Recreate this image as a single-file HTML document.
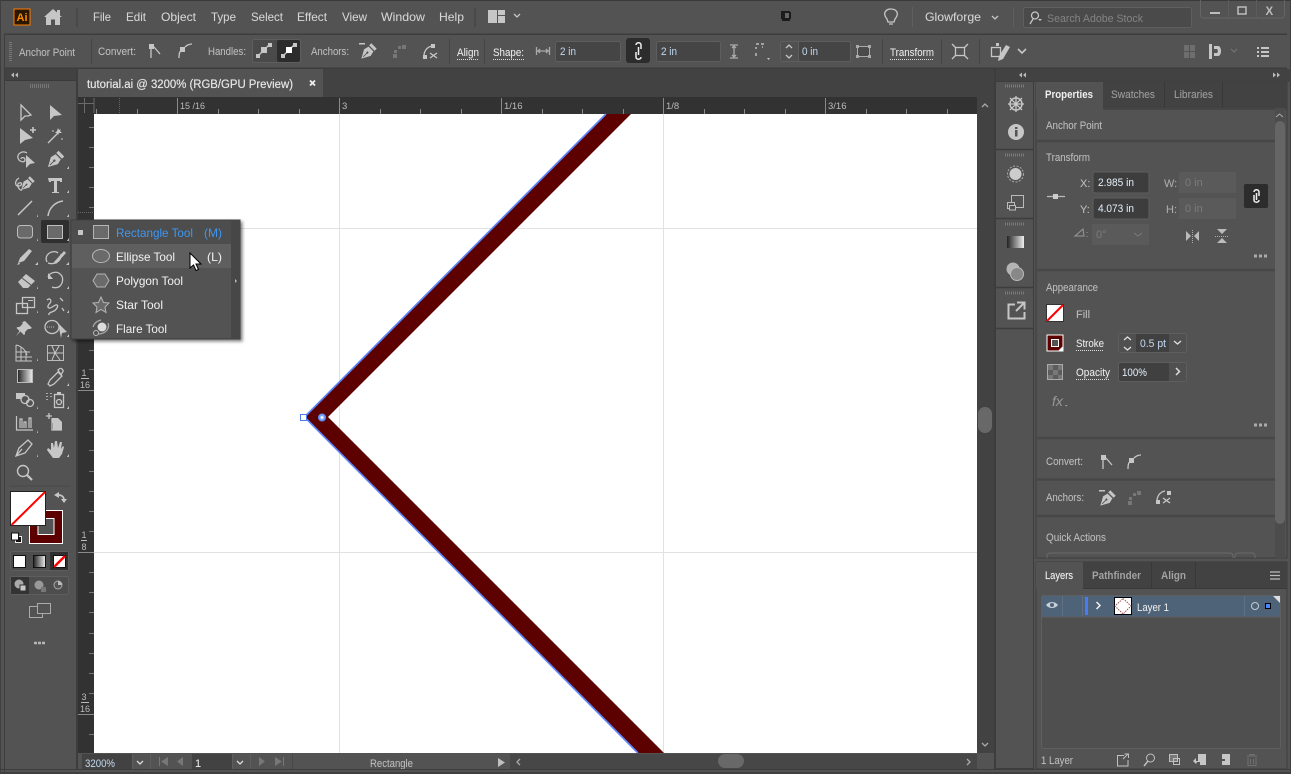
<!DOCTYPE html>
<html><head><meta charset="utf-8"><title>tutorial.ai</title>
<style>
html,body{margin:0;padding:0;background:#535353;overflow:hidden}
svg{display:block}
text{font-family:"Liberation Sans",sans-serif;font-size:11px;fill:#c8c8c8;white-space:pre;stroke:rgba(210,210,210,.22);stroke-width:.25}
.m{font-size:12px;fill:#d6d6d6}
.l{fill:#bdbdbd}
.w{fill:#f0f0f0}
.v{fill:#bcd4ee}
.r{font-size:9.5px;fill:#bbb;stroke:none}
.s{fill:none;stroke:#c6c6c6;stroke-width:1.3}
.f{fill:#c6c6c6}
.d{fill:none;stroke:#ddd;stroke-width:1;stroke-dasharray:1 1}
.i{fill:#454545;stroke:#5e5e5e}
.g{stroke:#e2e2e2;stroke-width:1}
.k{stroke:#8a8a8a;stroke-width:1}
.x{fill:#3f3f3f}
</style></head>
<body>
<svg width="1291" height="774" viewBox="0 0 1291 774" xmlns="http://www.w3.org/2000/svg">
<defs>
<g id="nib"><path fill="#c6c6c6" d="M0 11L-5.500 1L-4 -5H4L5.500 1Z"/><rect x="-4.500" y="-10" width="9" height="3.500" fill="#c6c6c6"/><path d="M0 8V2" stroke="#535353" stroke-width="1"/><circle cx="0" cy="1" r="1.300" fill="#535353"/></g>
<linearGradient id="gr"><stop offset="0" stop-color="#222"/><stop offset="1" stop-color="#eee"/></linearGradient>
<filter id="sh" x="-10%" y="-10%" width="125%" height="125%"><feDropShadow dx="2" dy="2" stdDeviation="1.500" flood-color="#000" flood-opacity=".5"/></filter>
</defs>
<rect width="1291" height="774" fill="#535353"/>
<rect width="1291" height="1" fill="#3a3a3a"/>
<rect y="772" width="1291" height="2" fill="#3f3f3f"/>
<rect y="0" width="1" height="774" fill="#3f3f3f"/><rect x="1290" width="1" height="774" fill="#3f3f3f"/>

<!-- top bar -->
<rect x="14" y="9" width="16" height="16" fill="#2b1700" stroke="#ff7c00" stroke-width="1"/>
<text x="16.500" y="21" style="font-size:11px;font-weight:bold;fill:#ff8a00;stroke:none">Ai</text>
<path class="f" d="M44 17 L53 9 L57 12.500 V10 H60 V15.500 L62 17 H60 V25 H55 V19.500 H51 V25 H46 V17Z"/>
<rect x="76" y="8" width="2" height="19" fill="#494949"/>
<text class="m" x="93" y="21" textLength="18" lengthAdjust="spacingAndGlyphs">File</text>
<text class="m" x="126" y="21" textLength="20" lengthAdjust="spacingAndGlyphs">Edit</text>
<text class="m" x="161" y="21" textLength="35" lengthAdjust="spacingAndGlyphs">Object</text>
<text class="m" x="211" y="21" textLength="25" lengthAdjust="spacingAndGlyphs">Type</text>
<text class="m" x="251" y="21" textLength="32" lengthAdjust="spacingAndGlyphs">Select</text>
<text class="m" x="297" y="21" textLength="30" lengthAdjust="spacingAndGlyphs">Effect</text>
<text class="m" x="342" y="21" textLength="25" lengthAdjust="spacingAndGlyphs">View</text>
<text class="m" x="381" y="21" textLength="44" lengthAdjust="spacingAndGlyphs">Window</text>
<text class="m" x="439" y="21" textLength="25" lengthAdjust="spacingAndGlyphs">Help</text>
<rect x="474" y="8" width="2" height="19" fill="#494949"/>
<path class="f" d="M488 10h9v13h-9zM498 10h7v5h-7zM498 16h7v7h-7z"/>
<path class="s" d="M514 14l3 3 3-3"/>
<path fill="#1c1c1c" d="M781 11h9v1h1v7h-1v2h-8v-2h-1z"/><rect x="785" y="13" width="4" height="5" fill="#666"/>
<path class="s" d="M887 19c-5-6-1-10 4-10s9 4 4 10l-1 3h-6zM889 24h4"/>
<rect x="912" y="7" width="1" height="20" fill="#5f5f5f"/>
<text class="m" x="925" y="21" textLength="56" lengthAdjust="spacingAndGlyphs">Glowforge</text>
<path class="s" d="M992 16l3 3 3-3"/>
<rect x="1013" y="7" width="1" height="20" fill="#5f5f5f"/>
<rect x="1023.500" y="7.500" width="168" height="20" rx="2" fill="#4a4a4a" stroke="#5f5f5f"/>
<circle cx="1035" cy="15.500" r="3.500" class="s"/><path class="s" d="M1033 19l-3 5"/><path class="f" d="M1038 19h4l-2 2z"/>
<text x="1047" y="22" textLength="96" lengthAdjust="spacingAndGlyphs" style="fill:#848484;stroke:none">Search Adobe Stock</text>
<path d="M1200.500 0v15a3 3 0 0 0 3 3h78a3 3 0 0 0 3-3V0" fill="none" stroke="#656565"/>
<path d="M1228.500 0v18M1256.500 0v18" stroke="#5c5c5c"/>
<rect x="1210" y="12" width="10" height="2" fill="#bdbdbd"/>
<rect x="1238" y="7" width="8" height="7" fill="none" stroke="#bdbdbd" stroke-width="1.500"/>
<text x="1265.500" y="15" style="font-size:11.500px;font-weight:bold;fill:#bbb;stroke:none">X</text>

<!-- control bar -->
<rect x="4" y="33.500" width="1283" height="1.500" fill="#3d3d3d"/>
<rect x="4" y="67.500" width="1283" height="1.500" fill="#3d3d3d"/>
<rect x="4" y="34" width="1" height="740" fill="#3d3d3d"/>
<path d="M10.500 42v19" stroke="#777" stroke-width="3" stroke-dasharray="1 1"/>
<text class="l" x="19" y="56" textLength="56" lengthAdjust="spacingAndGlyphs">Anchor Point</text>
<rect x="91" y="39" width="1" height="25" fill="#454545"/>
<text class="l" x="98" y="55" textLength="38" lengthAdjust="spacingAndGlyphs">Convert:</text>
<rect x="149" y="44" width="5" height="5" class="f"/><path class="s" d="M151 49v9M154 47l6 7"/>
<rect x="180" y="47" width="5" height="5" class="f"/><path class="s" d="M179 58c0-5 1-7 2-7M185 47c2-2 4-3 7-3"/>
<text class="l" x="208" y="55" textLength="38" lengthAdjust="spacingAndGlyphs">Handles:</text>
<rect x="252.500" y="39.500" width="48" height="23" rx="2" fill="#4a4a4a" stroke="#5e5e5e"/>
<rect x="277" y="40" width="23" height="22" rx="2" fill="#2c2c2c"/>
<path class="s" d="M258 56l12-12"/><rect x="261" y="47" width="6" height="6" class="f"/><rect x="256" y="54" width="4" height="4" class="f"/><rect x="268" y="43" width="4" height="4" class="f"/>
<path class="s" d="M283 56l12-12" /><rect x="286" y="47" width="6" height="6" fill="#fff"/><rect x="281" y="54" width="4" height="4" class="f"/><rect x="293" y="43" width="4" height="4" class="f"/>
<text class="l" x="311" y="55" textLength="38" lengthAdjust="spacingAndGlyphs">Anchors:</text>
<use href="#nib" transform="translate(368 52) rotate(45) scale(.85)"/><rect x="359" y="43" width="6" height="1.500" class="f"/>
<path fill="#777" d="M393 54h4v4h-4zM394 50h3v3h-3zM398 46h3v3h-3zM402 45h4v4h-4z"/>
<path class="s" d="M424 56c0-5 3-9 8-10"/><rect x="431" y="44" width="4" height="4" class="f"/><rect x="423" y="55" width="4" height="4" class="f"/><path class="s" d="M430 53l7 5M430 58l7-5"/>
<rect x="449" y="39" width="1" height="25" fill="#454545"/>
<text class="w" x="457" y="56" textLength="22" lengthAdjust="spacingAndGlyphs">Align</text><path class="d" d="M457 59.500h22"/>
<rect x="484" y="39" width="1" height="25" fill="#454545"/>
<text class="w" x="493" y="56" textLength="31" lengthAdjust="spacingAndGlyphs">Shape:</text><path class="d" d="M493 59.500h31"/>
<path class="s" style="stroke:#aaa" d="M536.500 47v8M549.500 47v8M537 51h12M540 49l-2 2 2 2M546 49l2 2-2 2"/>
<rect x="555.500" y="41.500" width="65" height="20" rx="2" class="i"/>
<text class="v" x="560" y="55" textLength="16" lengthAdjust="spacingAndGlyphs">2 in</text>
<rect x="626" y="38" width="24" height="25" rx="3" fill="#2c2c2c"/>
<path d="M636 45c0-3 5-3 5 0v4M641 57c0 3-5 3-5 0v-5M638.500 47v8" fill="none" stroke="#eee" stroke-width="1.500"/>
<rect x="656.500" y="41.500" width="64" height="20" rx="2" class="i"/>
<text class="v" x="661" y="55" textLength="16" lengthAdjust="spacingAndGlyphs">2 in</text>
<path class="s" style="stroke:#aaa" d="M730 45h8M730 58h8M734 45v13M732 48l2-2 2 2M732 55l2 2 2-2"/>
<path d="M756 44h3M761 44h3M756 47v2M756 53v3M762 47h1" stroke="#bbb" fill="none" stroke-width="1.500"/><path class="f" d="M767 58h3l-1.500 2z"/>
<rect x="780.500" y="41.500" width="70" height="20" rx="2" class="i"/>
<rect x="781" y="42" width="17" height="19" fill="#505050"/><rect x="798" y="42" width="1" height="19" fill="#5e5e5e"/>
<path class="s" d="M786 48l3-3 3 3M786 55l3 3 3-3"/>
<text class="v" x="802" y="55" textLength="16" lengthAdjust="spacingAndGlyphs">0 in</text>
<rect x="857.500" y="46.500" width="12" height="10" fill="#4a4a4a" stroke="#aaa"/><path d="M856 45h3v3h-3zM868 45h3v3h-3zM856 55h3v3h-3zM868 55h3v3h-3z" fill="#aaa"/>
<rect x="882" y="39" width="1" height="25" fill="#454545"/>
<text class="w" x="890" y="56" textLength="44" lengthAdjust="spacingAndGlyphs">Transform</text><path class="d" d="M890 59.500h44"/>
<rect x="941" y="39" width="1" height="25" fill="#454545"/>
<rect x="955.500" y="47.500" width="9" height="8" class="s" style="fill:none"/><path class="s" d="M952 44l4 4M968 44l-4 4M952 59l4-4M968 59l-4-4"/>
<rect x="979" y="39" width="1" height="25" fill="#454545"/>
<rect x="991.500" y="47.500" width="9" height="9" class="s"/><path class="f" d="M1006 45l4 2-7 12-5 2 1-5z"/><rect x="996" y="43" width="3" height="3" class="f"/>
<path class="s" d="M1018 49l4 4 4-4" style="stroke-width:1.600"/>
<path fill="#6e6e6e" d="M1184 45h5v6h-5zM1190 45h5v6h-5zM1184 52h5v6h-5zM1190 52h5v6h-5z"/>
<path class="f" d="M1209 44h3v15h-3zM1214 46h4c4 0 4 10 0 10h-4v-3h3c1 0 1-4 0-4h-3z"/>
<path d="M1231 49l3 3 3-3" fill="none" stroke="#777"/>
<path class="f" d="M1257 47h2v2h-2zM1261 47h8v2h-8zM1257 51h2v2h-2zM1261 51h8v2h-8zM1257 55h2v2h-2zM1261 55h8v2h-8z"/>

<!-- collapse rows -->
<rect x="5" y="69" width="71" height="11" fill="#424242"/>
<rect x="5" y="80" width="71" height="1" fill="#3a3a3a"/>
<path d="M14 72.500l-3 2.500 3 2.500zM18 72.500l-3 2.500 3 2.500z" fill="#bbb"/>
<path d="M30 86h19" stroke="#777" stroke-width="4" stroke-dasharray="1 1"/>
<rect x="76" y="69" width="2" height="700" fill="#3d3d3d"/>

<!-- tab bar -->
<rect x="78" y="69" width="916" height="28" fill="#424242"/>
<rect x="78" y="69" width="245" height="28" fill="#535353"/>
<text x="87" y="88" textLength="206" lengthAdjust="spacingAndGlyphs" style="font-size:11.500px;fill:#eaeaea;stroke:rgba(234,234,234,.5);stroke-width:.35">tutorial.ai @ 3200% (RGB/GPU Preview)</text>
<path d="M310 80.500l5 5M315 80.500l-5 5" stroke="#eee" stroke-width="1.800"/>

<!-- rulers -->
<rect x="78" y="97" width="899" height="17" fill="#323232"/>
<rect x="78" y="97" width="16" height="656" fill="#323232"/>
<path d="M78 103.500h16M84.500 98v15M94 98v15" stroke="#6a6a6a" fill="none"/>
<path d="M119.500 98v15" stroke="#666" stroke-dasharray="1 1"/>
<path class="k" d="M177.500 98v16M339.500 98v16M501.500 98v16M663.500 98v16M825.500 98v16"/>
<path class="k" d="M96.500 109v5M137.500 109v5M218.500 109v5M258.500 109v5M299.500 109v5M380.500 109v5M420.500 109v5M461.500 109v5M542.500 109v5M582.500 109v5M623.500 109v5M704.500 109v5M744.500 109v5M785.500 109v5M866.500 109v5M906.500 109v5M947.500 109v5"/>
<text class="r" x="180" y="109" textLength="25" lengthAdjust="spacingAndGlyphs">15 /16</text>
<text class="r" x="342" y="109">3</text>
<text class="r" x="504" y="109">1/16</text>
<text class="r" x="666" y="109">1/8</text>
<text class="r" x="828" y="109">3/16</text>
<path d="M78 212.500h16" stroke="#666" stroke-dasharray="1 1"/>
<path stroke="#777" d="M89 127.500h5M89 147.500h5M89 167.500h5M89 187.500h5M89 207.500h5M89 248.500h5M89 269.500h5M89 289.500h5M89 309.500h5M89 329.500h5M89 350.500h5M89 369.500h5M89 410.500h5M89 430.500h5M89 450.500h5M89 471.500h5M89 491.500h5M89 511.500h5M89 531.500h5M89 572.500h5M89 592.500h5M89 612.500h5M89 633.500h5M89 653.500h5M89 673.500h5M89 693.500h5M89 734.500h5"/>
<path class="k" d="M78 390.500h16M78 552.500h16M78 714.500h16"/>
<text class="r" x="81.500" y="376" style="font-size:9px">1</text><path d="M81 378.500h8" stroke="#bbb"/><text class="r" x="80" y="388" style="font-size:9px">16</text>
<text class="r" x="81.500" y="538" style="font-size:9px">1</text><path d="M81 540.500h6" stroke="#bbb"/><text class="r" x="81.500" y="550" style="font-size:9px">8</text>
<text class="r" x="81.500" y="700" style="font-size:9px">3</text><path d="M81 702.500h8" stroke="#bbb"/><text class="r" x="80" y="712" style="font-size:9px">16</text>

<!-- canvas -->
<rect x="94" y="114" width="883" height="639" fill="#fff"/>
<path class="g" d="M339.500 114v639M663.500 114v639M94 228.500h883M94 552.500h883"/>
<polygon points="606,114 631,114 328,417 664,753 638,753 304,417" fill="#5d0000"/>
<path d="M606 114L304.500 417L638 753" fill="none" stroke="#5a84f8" stroke-width="1.700"/>
<rect x="300.500" y="414.500" width="6" height="6" fill="#fff" stroke="#4a7bf0"/>
<circle cx="322" cy="417.500" r="3.200" fill="#9ab8ff" stroke="#5f8fff" stroke-width="1.600"/>
<circle cx="322" cy="417.500" r="1.200" fill="#fff"/>

<!-- v scroll -->
<rect x="977" y="97" width="17" height="656" fill="#424242"/>
<path class="s" style="stroke:#aaa" d="M982 107l3-3 3 3M982 743l3 3 3-3"/>
<rect x="978" y="407" width="14" height="26" rx="7" fill="#686868"/>
<rect x="994" y="69" width="2" height="700" fill="#3d3d3d"/>

<!-- status bar -->
<rect x="78" y="753" width="916" height="16" fill="#535353"/>
<rect x="82" y="754" width="50" height="16" fill="#424242"/>
<rect x="132" y="754" width="1" height="15" fill="#5e5e5e"/>
<text class="v" x="85" y="767" textLength="30" lengthAdjust="spacingAndGlyphs">3200%</text>
<path class="s" d="M137 761l3 3 3-3" style="stroke:#ddd"/>
<rect x="150" y="754" width="1" height="15" fill="#5e5e5e"/>
<path d="M159 757h1v9h-1zM168 757v9l-7-4.500zM183 757v9l-6-4.500z" fill="#777"/>
<rect x="192" y="754" width="40" height="16" fill="#424242"/>
<text class="w" x="195" y="767">1</text>
<path class="s" d="M237 761l3 3 3-3" style="stroke:#ddd"/>
<rect x="232" y="754" width="1" height="15" fill="#5e5e5e"/><rect x="250" y="754" width="1" height="15" fill="#5e5e5e"/>
<path d="M259 757v9l6-4.500zM275 757v9l7-4.500zM283 757h1v9h-1z" fill="#777"/>
<rect x="292" y="754" width="1" height="15" fill="#484848"/>
<text class="l" x="370" y="767" textLength="43" lengthAdjust="spacingAndGlyphs">Rectangle</text>
<path d="M498 758v9l7-4.500z" fill="#c0c0c0"/>
<rect x="510" y="754" width="467" height="15" fill="#474747"/>
<path class="s" style="stroke:#aaa" d="M520 759l-3 3 3 3M967 759l3 3-3 3"/>
<rect x="718" y="754" width="26" height="14" rx="7" fill="#686868"/>
<rect x="0" y="769" width="1291" height="1" fill="#3d3d3d"/>

<!-- tools -->
<path class="s" d="M21 105v15l4-4 3 0 3-1z" style="stroke-width:1.300"/>
<path class="f" d="M50 105v15l4-4 8-1z"/>
<path class="f" d="M20 128v16l5-4 8-2z"/><path class="s" d="M30 130h6M33 127v6" style="stroke-width:1.600"/>
<path class="s" d="M48 143l10-10"/><path class="f" d="M58 128l1 2 2-1-1 2 2 2-3 0-1 2-1-2-2 0 2-2zM53 130l1 1-1 1-1-1zM62 138l1 1-1 1-1-1z"/>
<path class="s" d="M27 153c-5-3-10 1-9 5s7 5 7 2-4-3-4-1"/><path class="f" d="M26 155l9 8-5 1-4 4z"/>
<use href="#nib" transform="translate(55 160) rotate(45) scale(.9)"/>
<path class="s" d="M19 178c-5 3-4 9 0 8s3-4 0-3 0 8 3 7"/>
<use href="#nib" transform="translate(27 184) rotate(45) scale(.75)"/>
<path class="f" d="M48 178h14v4h-2v-1h-3v11h2v1h-7v-1h2v-11h-3v1h-2z"/>
<path class="s" d="M18 215l14-14" style="stroke-width:1.500"/>
<path class="s" d="M48 216c1-8 7-14 15-15" style="stroke-width:1.500"/>
<rect x="17.500" y="225.500" width="15" height="12.500" rx="3" fill="#6a6a6a" stroke="#bdbdbd"/>
<rect x="41" y="220" width="28" height="23" rx="2" fill="#2f2f2f"/>
<rect x="47.500" y="225.500" width="15" height="13" fill="#6a6a6a" stroke="#bdbdbd"/>
<path class="f" d="M18 263l2-5 9-9 3 2-8 10zM17 265l3-1-1-2z"/>
<path class="s" d="M47 262c-4-8 7-13 11-9M61 254c1 8-8 11-13 9"/><path class="f" d="M54 262l10-11 2 2-10 11z"/>
<path class="f" d="M18 282l8-8 9 7-7 7h-5z"/><path d="M22 278l9 7" stroke="#535353"/>
<path class="s" d="M48 277c2-5 9-6 12-3 4 3 3 9 0 12-2 2-6 2-8 1" /><path class="f" d="M48 273v6h5z"/>
<rect x="16.500" y="303.500" width="11" height="10" class="s"/><rect x="22.500" y="297.500" width="12" height="10" class="s"/><path class="f" d="M28 300h5v1h-5z"/>
<path class="s" d="M47 300c3-3 5 1 3 3s-3 4-1 5 6-4 8-3-1 5-3 6-6 2-5 4M60 298l3 3M62 308l2 3"/>
<path class="f" d="M25 321l7 7-2 1h-2l-3 3v2l-1 1-3.500-3.500-4.500 4.500 3.500-5-3-3 1-1h2l3-3v-2z"/>
<ellipse cx="52" cy="327" rx="7" ry="6.500" class="s"/><path class="f" d="M58 323l9 9-5 1-1 5z"/><path d="M47 327h8" stroke="#bbb" stroke-dasharray="1 1"/>
<path class="s" d="M16 345v16h16M16 345c6 1 10 6 11 10M21 347v14M26 351v10M16 352h14M16 357h16" style="stroke-width:1"/>
<rect x="47.500" y="345.500" width="16" height="15" fill="none" stroke="#bbb"/><path class="s" d="M48 353l15 0M52 346l3 7 4-7M52 360l3-7 5 7" style="stroke-width:1"/>
<rect x="17.500" y="369.500" width="15" height="13" fill="url(#gr)" stroke="#bbb"/>
<path class="s" d="M48 384l2-4 8-8 4 4-8 8-4 2zM58 370c2-2 3-2 4-1s2 2 0 4l-1 2z"/>
<path class="f" d="M16 393h9v6h-9z"/><circle cx="25" cy="399.500" r="4" class="s" style="fill:#535353"/><circle cx="30" cy="403" r="3.500" class="s"/>
<path d="M46 393.500h2M50 393.500h2M46 396.500h2M50 396.500h2M46 399.500h2" stroke="#aaa" fill="none"/>
<rect x="54.500" y="394.500" width="9" height="13" class="s"/><rect x="57" y="392" width="4" height="3" class="f"/><circle cx="59" cy="402" r="2.500" class="s"/>
<path class="s" d="M16.500 416v14H33M20 428v-9h2v9M24 428v-6h2v6M29 428v-10h2v10" style="stroke-width:1.200"/>
<path class="s" d="M46 416h6M49 413v6"/><path class="f" d="M52 418h6l4 4v8H53v-7h-1z"/><path class="s" d="M52 418v12h10"/>
<path class="s" d="M16 456l3-8 9-8 4 4-7 9zM16 456l6-7"/>
<path class="f" d="M47 450l1-2 3 2v-7h2l1 5 1-7h2l1 7 2-6h2l-1 7 2-3 1 1-2 7-3 4h-6z"/>
<circle cx="23" cy="471" r="5.500" class="s" style="stroke-width:1.400"/><path d="M27 475l5 5" stroke="#c6c6c6" stroke-width="2.200"/>
<path d="M10 486h60" stroke="#4a4a4a"/>
<g fill="#c6c6c6">
<path d="M66 265h3v-3zM35 265h3v-3zM37 289h-2 3v-3zM67 289h2v-3zM37 313h1v-3zM67 313h2v-3zM67 337h2v-3zM37 361h1v-3zM67 386h2v-3zM37 409h1v-3zM67 409h2v-3zM37 433h1v-3zM37 457h1v-3zM67 457h2v-3zM37 241h1v-3zM67 241h2v-3zM37 217h1v-3zM67 217h2v-3zM67 193h2v-3zM67 169h2v-3z"/>
</g>

<!-- fill/stroke -->
<rect x="29.500" y="510.500" width="33" height="33" fill="#5d0000" stroke="#fff"/>
<rect x="38" y="518.500" width="16" height="16" fill="#535353" stroke="#fff"/>
<rect x="10.500" y="491.500" width="35" height="34" fill="#fff" stroke="#222"/>
<path d="M11.500 525L45 492" stroke="#f00" stroke-width="2"/>
<path class="f" d="M54 495l5-3v6zM61 499h6l-3 4z"/><path class="s" d="M58 495c4 0 6 2 6 5" style="stroke-width:1.700"/>
<rect x="15.500" y="536.500" width="6" height="6" fill="#111" stroke="#eee"/><rect x="11.500" y="533" width="7" height="7" fill="#fff" stroke="#111"/>
<rect x="10.500" y="551.500" width="58" height="19" rx="2" fill="#4d4d4d" stroke="#5e5e5e"/>
<rect x="50" y="552" width="18" height="18" fill="#2f2f2f"/>
<rect x="13.500" y="555.500" width="12" height="12" fill="#fff" stroke="#111"/>
<rect x="33.500" y="555.500" width="12" height="12" fill="url(#gr)" stroke="#111"/>
<rect x="53.500" y="555.500" width="12" height="12" fill="#fff" stroke="#111"/><path d="M54 567l11-11" stroke="#f00" stroke-width="2.500"/>
<rect x="10.500" y="576.500" width="58" height="18" rx="2" fill="#4d4d4d" stroke="#5e5e5e"/>
<rect x="11" y="577" width="18" height="17" fill="#333"/>
<circle cx="19" cy="584" r="4.500" fill="#aaa"/><rect x="20" y="585" width="6" height="6" fill="#c8c8c8" stroke="#333"/>
<circle cx="39" cy="585" r="4.500" fill="#999"/><rect x="41" y="587" width="5" height="5" fill="#777"/>
<circle cx="58" cy="585" r="4" fill="#555" stroke="#aaa"/><path d="M58 585h4a4 4 0 0 0-4-4z" fill="#bbb"/>
<rect x="29.500" y="606.500" width="13" height="11" fill="none" stroke="#aaa"/><rect x="37.500" y="603.500" width="13" height="10" fill="#535353" stroke="#aaa"/>
<path d="M34 643h3M38 643h3M42 643h3" stroke="#b5b5b5" stroke-width="2.500"/>

<!-- flyout -->
<rect x="71" y="220" width="169" height="119" fill="#535353" stroke="#3c3c3c" filter="url(#sh)"/>
<rect x="72" y="221" width="159" height="23" fill="#4d4d4d"/>
<rect x="72" y="244" width="159" height="24" fill="#5f5f5f"/>
<rect x="231" y="221" width="9" height="118" rx="1" fill="#474747"/>
<path d="M235 279v4l2-2z" fill="#bbb"/>
<rect x="78" y="230" width="5" height="5" fill="#c6c6c6"/>
<rect x="93.500" y="225.500" width="15" height="13" fill="#6a6a6a" stroke="#b5b5b5"/>
<ellipse cx="101" cy="256" rx="8.500" ry="6.500" fill="#6a6a6a" stroke="#b5b5b5"/>
<path d="M93 280.500l4-6.500h8l4 6.500-4 6.500h-8z" fill="#6a6a6a" stroke="#b5b5b5"/>
<path d="M101 297l2.500 5.500 5.500.5-4 4 1 5.500-5-3-5 3 1-5.500-4-4 5.500-.5z" fill="#6a6a6a" stroke="#b5b5b5"/>
<circle cx="102" cy="327" r="4.500" fill="#ddd"/><path d="M108 323c2 5-2 11-10 11M93 327c1-4 4-6 8-7" class="s" style="stroke:#aaa"/><circle cx="96" cy="333" r="2.500" fill="#535353" stroke="#bbb"/>
<text x="116" y="237" textLength="77" lengthAdjust="spacingAndGlyphs" style="font-size:12px;fill:#3e97f0;stroke:none">Rectangle Tool</text>
<text x="204" y="237" textLength="18" lengthAdjust="spacingAndGlyphs" style="font-size:12px;fill:#3e97f0;stroke:none">(M)</text>
<text class="w" x="116" y="261" textLength="59" lengthAdjust="spacingAndGlyphs" style="font-size:12px">Ellipse Tool</text>
<text class="w" x="207" y="261" textLength="15" lengthAdjust="spacingAndGlyphs" style="font-size:12px">(L)</text>
<text class="w" x="116" y="285" textLength="67" lengthAdjust="spacingAndGlyphs" style="font-size:12px">Polygon Tool</text>
<text class="w" x="116" y="309" textLength="47" lengthAdjust="spacingAndGlyphs" style="font-size:12px">Star Tool</text>
<text class="w" x="116" y="333" textLength="51" lengthAdjust="spacingAndGlyphs" style="font-size:12px">Flare Tool</text>
<path d="M190 253v15l3.500-3 2.500 5.500 2.500-1-2.500-5.500h5z" fill="#fff" stroke="#000"/>

<!-- right collapse -->
<rect x="996" y="69" width="295" height="13" fill="#424242"/>
<path d="M1022 72.500l-3 2.500 3 2.500zM1026 72.500l-3 2.500 3 2.500z" fill="#bbb"/>
<path d="M1273 72.500l3 2.500-3 2.500zM1277 72.500l3 2.500-3 2.500z" fill="#bbb"/>

<!-- dock -->
<rect x="995.500" y="81.500" width="38" height="687" fill="#535353" stroke="#3d3d3d"/>
<path d="M996 149.500h37M996 218.500h37M996 287.500h37M996 328.500h37" stroke="#3d3d3d" stroke-width="1.500"/>
<path d="M1005 86h19M1005 155h19M1005 224h19M1005 293h19" stroke="#7a7a7a" stroke-width="3" stroke-dasharray="1 1"/>
<circle cx="1016" cy="104" r="6" fill="none" stroke="#c6c6c6" stroke-width="1.500"/><circle cx="1016" cy="104" r="2" fill="#c6c6c6"/><path class="s" d="M1016 96v16M1008 104h16M1010 98l12 12M1022 98l-12 12"/>
<circle cx="1016" cy="132" r="8" fill="#c6c6c6"/><rect x="1015" y="130" width="2.500" height="6.500" fill="#535353"/><rect x="1015" y="127" width="2.500" height="2" fill="#535353"/>
<circle cx="1015.500" cy="174" r="8" fill="none" stroke="#aaa" stroke-dasharray="2 1.500"/><circle cx="1015.500" cy="174" r="6" fill="#ccc"/>
<rect x="1011.500" y="195.500" width="12" height="12" fill="none" stroke="#bbb"/><rect x="1007.500" y="202.500" width="7" height="6" fill="#535353" stroke="#bbb"/><rect x="1009.500" y="205.500" width="6" height="4.500" fill="#535353" stroke="#bbb"/>
<rect x="1007" y="236" width="17" height="12" fill="url(#gr)"/>
<circle cx="1013" cy="269" r="6.500" fill="#b4b4b4"/><circle cx="1017" cy="274" r="6.500" fill="#888" stroke="#bbb"/>
<path d="M1015 304.500h-6.500v14h16V312M1017 302.500h7.500v7M1024 303l-8 8" fill="none" stroke="#c6c6c6" stroke-width="2"/>

<!-- properties -->
<rect x="1036" y="82" width="251" height="476" fill="#535353" stroke="#3d3d3d"/>
<rect x="1036" y="82" width="251" height="26" fill="#424242"/>
<rect x="1036" y="82" width="67" height="27" fill="#535353"/>
<path d="M1164.500 82v26M1222.500 82v26" stroke="#383838"/><path d="M1103 109h184" stroke="#3a3a3a"/>
<text class="w" x="1045" y="98" textLength="48" lengthAdjust="spacingAndGlyphs" style="font-weight:bold;stroke:none">Properties</text>
<text x="1111" y="98" textLength="44" lengthAdjust="spacingAndGlyphs" style="fill:#9a9a9a">Swatches</text>
<text x="1174" y="98" textLength="39" lengthAdjust="spacingAndGlyphs" style="fill:#9a9a9a">Libraries</text>
<rect x="1275" y="108" width="10" height="450" fill="#4c4c4c"/>
<path d="M1276 117l3.500-3 3.500 3" fill="none" stroke="#aaa"/>
<rect x="1275" y="121" width="10" height="403" rx="5" fill="#656565"/>
<path d="M1036 141h239M1036 270h239M1036 438h239M1036 479.500h239M1036 516h239" stroke="#474747" stroke-width="2.500"/>
<text class="l" x="1046" y="129" textLength="56" lengthAdjust="spacingAndGlyphs">Anchor Point</text>
<text class="l" x="1046" y="161" textLength="44" lengthAdjust="spacingAndGlyphs">Transform</text>
<path class="s" d="M1047 196.500h18" style="stroke:#bbb"/><rect x="1053" y="194" width="5" height="5" fill="#ccc"/>
<text class="l" x="1080" y="187">X:</text><text class="l" x="1080" y="213">Y:</text>
<rect x="1093" y="172" width="56" height="21" rx="2" fill="#3d3d3d" stroke="#5e5e5e"/>
<rect x="1093" y="198" width="56" height="21" rx="2" fill="#3d3d3d" stroke="#5e5e5e"/>
<text class="v" x="1098" y="186" textLength="36" lengthAdjust="spacingAndGlyphs" style="fill:#e0ecf8">2.985 in</text>
<text class="v" x="1098" y="212" textLength="36" lengthAdjust="spacingAndGlyphs" style="fill:#e0ecf8">4.073 in</text>
<text x="1164" y="187" style="fill:#a8a8a8">W:</text><text x="1166" y="213" style="fill:#a8a8a8">H:</text>
<rect x="1179" y="172" width="57" height="21" rx="1" fill="#5a5a5a"/>
<rect x="1179" y="198" width="57" height="21" rx="1" fill="#5a5a5a"/>
<text x="1185" y="186" style="fill:#7b7b7b;stroke:none">0 in</text><text x="1185" y="212" style="fill:#7b7b7b;stroke:none">0 in</text>
<rect x="1244" y="184" width="24" height="24" rx="2" fill="#2c2c2c"/>
<path d="M1254 192c0-3 5-3 5 0v4M1259 200c0 3-5 3-5 0v-5M1256.500 193v7" fill="none" stroke="#eee" stroke-width="1.500"/>
<path d="M1075 236l8-7 1 7zM1087 232v1M1087 236v1" fill="none" stroke="#999"/>
<rect x="1092" y="224" width="57" height="21" rx="1" fill="#5a5a5a"/>
<text x="1096" y="238" style="fill:#7b7b7b;stroke:none">0°</text>
<path d="M1134 233l4 3 4-3" fill="none" stroke="#7b7b7b"/>
<path d="M1186 231v10l5-5zM1199 231v10l-5-5z" fill="#bbb"/><path d="M1192.500 230v13" stroke="#aaa" stroke-dasharray="1 1"/>
<path d="M1217 229h10l-5 5zM1217 243h10l-5-5z" fill="#bbb"/><path d="M1215 236.500h14" stroke="#aaa" stroke-dasharray="1 1"/>
<path d="M1254 256h3M1259 256h3M1264 256h3M1254 425h3M1259 425h3M1264 425h3" stroke="#aaa" stroke-width="3"/>
<text class="l" x="1046" y="291" textLength="52" lengthAdjust="spacingAndGlyphs">Appearance</text>
<rect x="1046.500" y="304.500" width="17" height="17" fill="#fff" stroke="#333"/><path d="M1047 321l16-16" stroke="#f00" stroke-width="2"/>
<text class="l" x="1076" y="318">Fill</text>
<rect x="1047" y="335" width="16" height="16" fill="#5d0000" stroke="#fff"/><rect x="1051.500" y="339.500" width="7" height="7" fill="#535353" stroke="#fff"/><path d="M1058 351h5v-5z" fill="#fff"/>
<text class="w" x="1076" y="347" textLength="28" lengthAdjust="spacingAndGlyphs">Stroke</text><path class="d" d="M1076 350.500h28"/>
<rect x="1118.500" y="333.500" width="68" height="19" rx="2" fill="#404040" stroke="#5e5e5e"/>
<rect x="1119" y="334" width="17" height="18" fill="#505050"/><rect x="1169" y="334" width="17" height="18" fill="#505050"/>
<path class="s" d="M1124 340l3.500-3 3.500 3M1124 347l3.500 3 3.500-3M1174 341l3.500 3 3.500-3" style="stroke:#ddd"/>
<text class="v" x="1140" y="347" textLength="26" lengthAdjust="spacingAndGlyphs">0.5 pt</text>
<rect x="1047.500" y="364.500" width="15" height="15" fill="#5c5c5c" stroke="#aaa"/><path d="M1048 365h5v5h-5zM1058 365h4v5h-4zM1053 370h5v5h-5zM1048 375h5v4h-5zM1058 375h4v4h-4z" fill="#777"/>
<text class="w" x="1076" y="376" textLength="34" lengthAdjust="spacingAndGlyphs">Opacity</text><path class="d" d="M1076 379.500h34"/>
<rect x="1118.500" y="362.500" width="68" height="19" rx="2" fill="#404040" stroke="#5e5e5e"/>
<rect x="1169" y="363" width="17" height="18" fill="#505050"/>
<text class="v" x="1122" y="376" textLength="25" lengthAdjust="spacingAndGlyphs" style="fill:#e0ecf8">100%</text>
<path class="s" d="M1176 368l3.500 3.500-3.500 3.500" style="stroke:#ddd;stroke-width:1.500"/>
<text x="1052" y="406" style="font-style:italic;font-size:14px;fill:#999;stroke:none">fx</text><path d="M1065 405h2.500l-1.200 1.500z" fill="#aaa"/>
<text class="l" x="1046" y="465" textLength="37" lengthAdjust="spacingAndGlyphs">Convert:</text>
<rect x="1101" y="455" width="5" height="5" class="f"/><path class="s" d="M1103 460v9M1106 458l6 7"/>
<rect x="1129" y="458" width="5" height="5" class="f"/><path class="s" d="M1128 469c0-5 1-7 2-7M1134 458c2-2 4-3 7-3"/>
<text class="l" x="1046" y="501" textLength="38" lengthAdjust="spacingAndGlyphs">Anchors:</text>
<use href="#nib" transform="translate(1107 499) rotate(45) scale(.85)"/><rect x="1099" y="490" width="6" height="1.500" class="f"/>
<path fill="#777" d="M1128 501h4v4h-4zM1129 497h3v3h-3zM1133 493h3v3h-3zM1137 491h4v4h-4z"/>
<path class="s" d="M1157 501c0-5 3-9 8-10"/><rect x="1167" y="491" width="4" height="4" class="f"/><rect x="1156" y="500" width="4" height="4" class="f"/><path class="s" d="M1163 498l7 5M1163 503l7-5"/>
<text class="l" x="1046" y="541" textLength="60" lengthAdjust="spacingAndGlyphs">Quick Actions</text>
<path d="M1047 558v-2a3 3 0 0 1 3-3h180a3 3 0 0 1 3 3v2M1235 558v-2a3 3 0 0 1 3-3h14a3 3 0 0 1 3 3v2" fill="none" stroke="#6a6a6a"/>

<!-- layers -->
<rect x="1036" y="562" width="251" height="207" fill="#535353" stroke="#3d3d3d"/>
<rect x="1036" y="562" width="251" height="26" fill="#424242"/>
<rect x="1036" y="562" width="47" height="27" fill="#535353"/>
<path d="M1151.500 562v26M1195.500 562v26" stroke="#383838"/><path d="M1083 588.500h204" stroke="#3a3a3a"/>
<text class="w" x="1045" y="579" textLength="28" lengthAdjust="spacingAndGlyphs" style="stroke:rgba(240,240,240,.5);stroke-width:.3">Layers</text>
<text x="1092" y="579" textLength="49" lengthAdjust="spacingAndGlyphs" style="fill:#a2a2a2;font-weight:bold;stroke:none">Pathfinder</text>
<text x="1161" y="579" textLength="25" lengthAdjust="spacingAndGlyphs" style="fill:#a2a2a2;font-weight:bold;stroke:none">Align</text>
<path d="M1270 572h10M1270 575.500h10M1270 579h10" stroke="#bbb" stroke-width="1.200"/>
<rect x="1041.500" y="595.500" width="239" height="153" rx="2" fill="#4f4f4f" stroke="#5f5f5f"/>
<rect x="1042" y="596" width="238" height="21" fill="#4e6278"/>
<path d="M1062.500 596v21M1082.500 596v21M1244.500 596v21" stroke="#5f7285"/><path d="M1042 617h238" stroke="#5f5f5f"/>
<path d="M1046 605c3-4 9-4 12 0-3 4-9 4-12 0z" fill="#c8d0d8"/><circle cx="1052" cy="605" r="2" fill="#4e6278"/>
<rect x="1085" y="597" width="3" height="18" fill="#4a7bf0"/>
<path d="M1096.500 602l3.500 3.500-3.500 3.500" fill="none" stroke="#eee" stroke-width="1.500"/>
<rect x="1114.500" y="597.500" width="17" height="17" fill="#fff" stroke="#000"/>
<path d="M1123 598.500l8 7.500-8 8-8-8z" fill="none" stroke="#a05050" stroke-dasharray="1.500 1"/>
<text class="w" x="1137" y="611" textLength="32" lengthAdjust="spacingAndGlyphs">Layer 1</text>
<circle cx="1255" cy="606" r="3.500" fill="none" stroke="#c4ccd4"/>
<rect x="1265.500" y="603.500" width="5" height="5" fill="#4a86ff" stroke="#000"/>
<path d="M1273 596h7v7z" fill="#ddd"/>
<text class="l" x="1041" y="764" textLength="32" lengthAdjust="spacingAndGlyphs">1 Layer</text>
<path d="M1124 755.500h-6.500v10.500h10.500v-6M1123 759l5-5M1124.500 754h4v4" fill="none" stroke="#c0c0c0"/>
<circle cx="1150.500" cy="758" r="4" fill="none" stroke="#c0c0c0"/><path d="M1148 761l-4 5" stroke="#c0c0c0" stroke-width="1.500"/>
<rect x="1169.500" y="754.500" width="8" height="7" fill="#777" stroke="#c0c0c0"/><rect x="1173.500" y="758.500" width="6" height="6" fill="none" stroke="#c0c0c0"/>
<path class="f" d="M1198 754h8v11h-6v-3h-3l-1 2-3-3 3-3v3h2z"/>
<path class="f" d="M1222 754h8v11h-8v-4h3v-2h-3z" />
<path d="M1247 756h10M1250 756v-1.500h4v1.500M1248 757.500v8h8v-8M1250.500 759v5M1253.500 759v5" fill="none" stroke="#707070"/>
</svg>
</body></html>
